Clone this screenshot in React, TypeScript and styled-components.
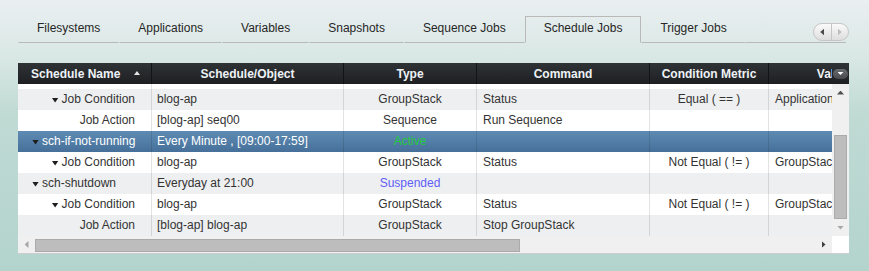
import { useLayoutEffect, useRef } from "react";
import styled, { createGlobalStyle } from "styled-components";

const GlobalStyle = createGlobalStyle`
  html, body { margin: 0; padding: 0; }
  body {
    font-family: "Liberation Sans", Arial, sans-serif;
    font-size: 12px;
  }
`;

const columns = "134px 192px 133px 173px 119px 128px";

const tabs = [
  "Filesystems",
  "Applications",
  "Variables",
  "Snapshots",
  "Sequence Jobs",
  "Schedule Jobs",
  "Trigger Jobs",
];

type Status = "active" | "suspended";

interface JobRow {
  child: boolean;
  expandable: boolean;
  name: string;
  object: string;
  type?: string;
  status?: Status;
  command: string;
  metric: string;
  value: string;
  selected?: boolean;
}

const rows: JobRow[] = [
  { child: false, expandable: true, name: "sch-boot", object: "At 08:00", status: "active", command: "", metric: "", value: "" },
  { child: true, expandable: true, name: "Job Condition", object: "blog-ap", type: "GroupStack", command: "Status", metric: "Equal ( == )", value: "Application Running" },
  { child: true, expandable: false, name: "Job Action", object: "[blog-ap] seq00", type: "Sequence", command: "Run Sequence", metric: "", value: "" },
  { child: false, expandable: true, name: "sch-if-not-running", object: "Every Minute , [09:00-17:59]", status: "active", command: "", metric: "", value: "", selected: true },
  { child: true, expandable: true, name: "Job Condition", object: "blog-ap", type: "GroupStack", command: "Status", metric: "Not Equal ( != )", value: "GroupStack Running" },
  { child: false, expandable: true, name: "sch-shutdown", object: "Everyday at 21:00", status: "suspended", command: "", metric: "", value: "" },
  { child: true, expandable: true, name: "Job Condition", object: "blog-ap", type: "GroupStack", command: "Status", metric: "Not Equal ( != )", value: "GroupStack Stopped" },
  { child: true, expandable: false, name: "Job Action", object: "[blog-ap] blog-ap", type: "GroupStack", command: "Stop GroupStack", metric: "", value: "" },
];

type Dir = "up" | "down" | "left" | "right";
const shapes: Record<Dir, string> = {
  up: "polygon(50% 0, 100% 100%, 0 100%)",
  down: "polygon(0 0, 100% 0, 50% 100%)",
  left: "polygon(100% 0, 100% 100%, 0 50%)",
  right: "polygon(0 0, 100% 50%, 0 100%)",
};

const Arrow = styled.span<{ $dir: Dir; $w: number; $h: number; $color: string }>`
  display: inline-block;
  flex: none;
  width: ${(p) => p.$w}px;
  height: ${(p) => p.$h}px;
  background: ${(p) => p.$color};
  clip-path: ${(p) => shapes[p.$dir]};
`;

const Page = styled.div`
  width: 869px;
  height: 271px;
  overflow: hidden;
  box-sizing: border-box;
  padding-top: 16px;
  background: linear-gradient(180deg, #eaeff1 0%, #d8e7e4 22%, #c0dad4 42%, #b3d4cd 100%);
`;

const TabBar = styled.div`
  display: flex;
  height: 27px;
  margin: 0 23px 0 18px;
`;

const Tab = styled.div<{ $active?: boolean }>`
  box-sizing: border-box;
  height: 27px;
  padding: 0 18px 3px;
  line-height: 22px;
  color: #262626;
  white-space: nowrap;
  border: 1px solid transparent;
  border-color: ${(p) => (p.$active ? "#b9b9b9 #b9b9b9 transparent" : "transparent transparent #b9b9b9")};
`;

const TabFiller = styled.div`
  flex: 1;
  display: flex;
  justify-content: flex-end;
  align-items: flex-end;
  box-sizing: border-box;
  height: 27px;
  border-bottom: 1px solid #b9b9b9;
`;

const TabScroller = styled.div`
  display: flex;
  box-sizing: border-box;
  width: 36px;
  height: 18px;
  margin: 0 -3px 1px 0;
  border: 1px solid #c6c6c6;
  border-radius: 9px;
  background: linear-gradient(180deg, #fafafa, #dedede);
  overflow: hidden;
`;

const ScrollerHalf = styled.div<{ $divider?: boolean }>`
  flex: 1;
  display: flex;
  align-items: center;
  justify-content: center;
  border-right: ${(p) => (p.$divider ? "1px solid #c6c6c6" : "none")};
`;

const Panel = styled.div`
  width: 831px;
  margin: 20px 0 0 18px;
  display: flex;
  flex-direction: column;
  border-bottom: 1px solid #cdcdcd;
  background: #fff;
`;

const Header = styled.div`
  display: flex;
  height: 21px;
  background: linear-gradient(180deg, #303336, #1d1f21);
`;

const HeaderCols = styled.div`
  width: 814px;
  overflow: hidden;
  display: grid;
  grid-template-columns: ${columns};
`;

const HeaderCell = styled.div<{ $left?: boolean }>`
  display: flex;
  align-items: center;
  justify-content: ${(p) => (p.$left ? "flex-start" : "center")};
  box-sizing: border-box;
  padding: 1px 0 0 ${(p) => (p.$left ? "13px" : "0")};
  line-height: 20px;
  font-weight: bold;
  color: #eef2f6;
  white-space: nowrap;
  overflow: hidden;
  border-right: 1px solid #121314;
`;

const SortMark = styled.span`
  display: flex;
  margin: 0 11px 2px auto;
`;

const MenuCell = styled.div`
  width: 17px;
  display: flex;
  align-items: center;
  justify-content: center;
`;

const MenuButton = styled.div`
  width: 15px;
  height: 10px;
  border-radius: 5px;
  background: linear-gradient(180deg, #6a6d70, #47494b);
  display: flex;
  align-items: center;
  justify-content: center;
`;

const Middle = styled.div`
  display: flex;
  height: 152px;
`;

const Body = styled.div`
  width: 814px;
  height: 152px;
  overflow: hidden;
`;

const Row = styled.div<{ $tone: "even" | "odd" | "selected" }>`
  display: grid;
  grid-template-columns: ${columns};
  width: max-content;
  height: 21px;
  line-height: 21px;
  color: ${(p) => (p.$tone === "selected" ? "#fff" : "#333")};
  background: ${(p) =>
    p.$tone === "selected"
      ? "linear-gradient(180deg, #5e8bb3, #46709a)"
      : p.$tone === "odd"
      ? "#eeeff1"
      : "#fff"};
`;

const Cell = styled.div<{ $align?: "left" | "center" }>`
  box-sizing: border-box;
  padding: 0 6px;
  text-align: ${(p) => p.$align ?? "left"};
  white-space: nowrap;
  overflow: hidden;
  border-right: 1px solid rgba(0, 0, 0, 0.11);
`;

const TreeCell = styled.div<{ $child: boolean }>`
  display: flex;
  align-items: center;
  justify-content: ${(p) => (p.$child ? "flex-end" : "flex-start")};
  box-sizing: border-box;
  padding: ${(p) => (p.$child ? "0 16px 0 0" : "0 0 0 14px")};
  white-space: nowrap;
  overflow: hidden;
  border-right: 1px solid rgba(0, 0, 0, 0.11);
`;

const Expander = styled.span`
  display: flex;
  margin: 1px 3px 0 0;
`;

const StatusText = styled.span<{ $status: Status }>`
  color: ${(p) => (p.$status === "active" ? "#26c93f" : "#5e5ef5")};
`;

const VScroll = styled.div`
  width: 17px;
  display: flex;
  flex-direction: column;
  background: #f0f0f0;
`;

const ScrollButton = styled.div`
  flex: none;
  width: 17px;
  height: 17px;
  display: flex;
  align-items: center;
  justify-content: center;
`;

const VTrack = styled.div`
  flex: 1;
  display: flex;
  flex-direction: column;
  justify-content: flex-end;
  padding: 0 2px;
`;

const VThumb = styled.div`
  height: 84px;
  box-sizing: border-box;
  background: #bdbdbd;
  border: 1px solid #ababab;
`;

const Bottom = styled.div`
  display: flex;
  height: 17px;
`;

const HScroll = styled.div`
  width: 814px;
  display: flex;
  background: #f0f0f0;
`;

const HTrack = styled.div`
  flex: 1;
  display: flex;
  padding: 3px 0 1px;
`;

const HThumb = styled.div`
  width: 485px;
  box-sizing: border-box;
  background: #bdbdbd;
  border: 1px solid #ababab;
`;

const Corner = styled.div`
  width: 17px;
  background: #fff;
`;

function JobGridRow({ row, index }: { row: JobRow; index: number }) {
  const tone = row.selected ? "selected" : index % 2 ? "odd" : "even";
  return (
    <Row $tone={tone}>
      <TreeCell $child={row.child}>
        {row.expandable && (
          <Expander>
            <Arrow $dir="down" $w={7} $h={5} $color="#1e1e1e" />
          </Expander>
        )}
        {row.name}
      </TreeCell>
      <Cell style={{ paddingLeft: 5 }}>{row.object}</Cell>
      <Cell $align="center">
        {row.status ? (
          <StatusText $status={row.status}>
            {row.status === "active" ? "Active" : "Suspended"}
          </StatusText>
        ) : (
          row.type
        )}
      </Cell>
      <Cell>{row.command}</Cell>
      <Cell $align="center">{row.metric}</Cell>
      <Cell>{row.value}</Cell>
    </Row>
  );
}

export default function App() {
  const bodyRef = useRef<HTMLDivElement>(null);

  useLayoutEffect(() => {
    if (bodyRef.current) bodyRef.current.scrollTop = 16;
  }, []);

  return (
    <Page>
      <GlobalStyle />
      <TabBar>
        {tabs.map((name) => (
          <Tab key={name} $active={name === "Schedule Jobs"}>
            {name}
          </Tab>
        ))}
        <TabFiller>
          <TabScroller>
            <ScrollerHalf $divider>
              <Arrow $dir="left" $w={4} $h={7} $color="#4a4a4a" />
            </ScrollerHalf>
            <ScrollerHalf>
              <Arrow $dir="right" $w={4} $h={7} $color="#bdbdbd" />
            </ScrollerHalf>
          </TabScroller>
        </TabFiller>
      </TabBar>

      <Panel>
        <Header>
          <HeaderCols>
            <HeaderCell $left>
              Schedule Name
              <SortMark>
                <Arrow $dir="up" $w={6} $h={4} $color="#e6e6e6" />
              </SortMark>
            </HeaderCell>
            <HeaderCell>Schedule/Object</HeaderCell>
            <HeaderCell>Type</HeaderCell>
            <HeaderCell>Command</HeaderCell>
            <HeaderCell>Condition Metric</HeaderCell>
            <HeaderCell>Value</HeaderCell>
          </HeaderCols>
          <MenuCell>
            <MenuButton>
              <Arrow $dir="down" $w={6} $h={3} $color="#fff" />
            </MenuButton>
          </MenuCell>
        </Header>

        <Middle>
          <Body ref={bodyRef}>
            {rows.map((row, i) => (
              <JobGridRow key={i} row={row} index={i} />
            ))}
          </Body>
          <VScroll>
            <ScrollButton>
              <Arrow $dir="up" $w={7} $h={4} $color="#505050" />
            </ScrollButton>
            <VTrack>
              <VThumb />
            </VTrack>
            <ScrollButton>
              <Arrow $dir="down" $w={7} $h={4} $color="#a6a6a6" />
            </ScrollButton>
          </VScroll>
        </Middle>

        <Bottom>
          <HScroll>
            <ScrollButton>
              <Arrow $dir="left" $w={4} $h={7} $color="#a6a6a6" />
            </ScrollButton>
            <HTrack>
              <HThumb />
            </HTrack>
            <ScrollButton>
              <Arrow $dir="right" $w={4} $h={7} $color="#404040" />
            </ScrollButton>
          </HScroll>
          <Corner />
        </Bottom>
      </Panel>
    </Page>
  );
}
